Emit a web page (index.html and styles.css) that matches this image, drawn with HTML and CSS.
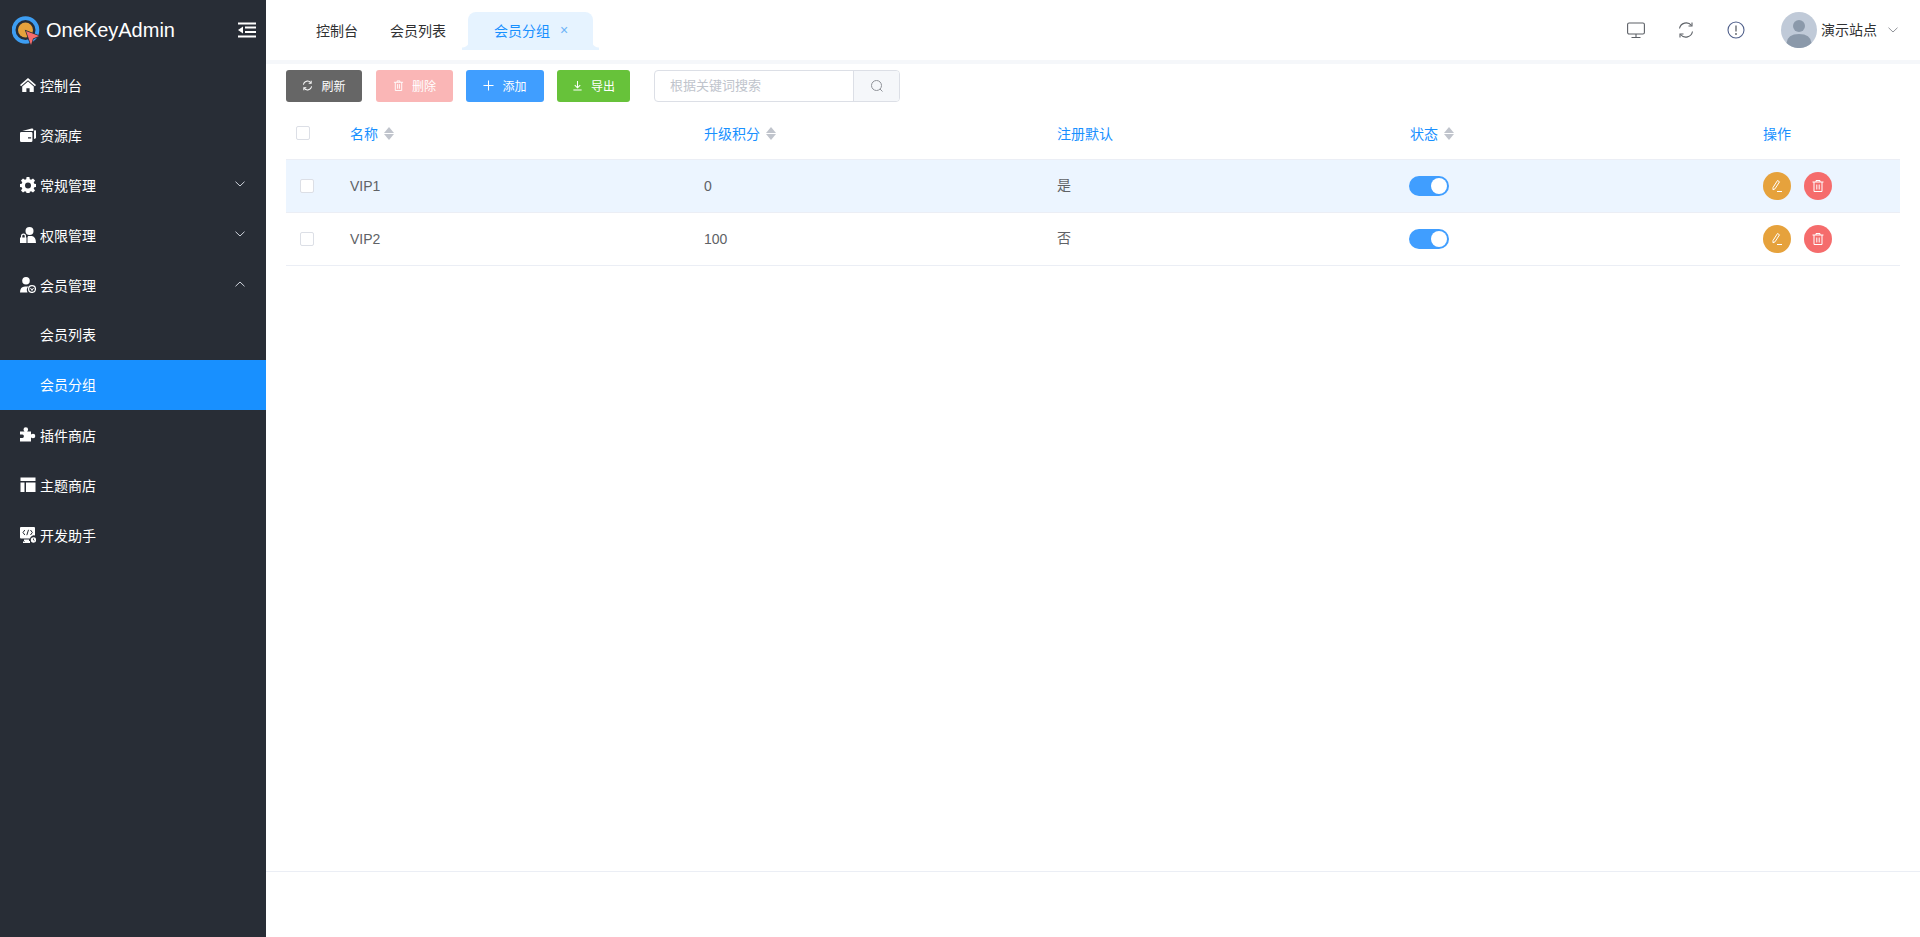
FILE: index.html
```html
<!DOCTYPE html>
<html lang="zh-CN">
<head>
    <meta charset="UTF-8">
    <title>OneKeyAdmin</title>
    <link rel="stylesheet" href="styles.css">
</head>
<body>
    <aside class="sidebar">
        <div class="brand">
            <svg class="logo" viewBox="0 0 30 30" width="30" height="30">
                <circle cx="13.5" cy="15" r="11.9" fill="none" stroke="#3d9df2" stroke-width="3.8"/>
                <circle cx="13.5" cy="15" r="7.5" fill="#e6a23c"/>
                <path d="M14 16L27 21L21 23.500L19 30Z" fill="#f56c6c" stroke="#282d36" stroke-width="1.500" paint-order="stroke"/>
            </svg>
            <span class="brand-name">OneKeyAdmin</span>
            <svg class="fold" viewBox="0 0 18 16" width="18" height="16">
                <path d="M0 1.500h18M7 5.500h11M7 10h11M0 14.500h18" stroke="#fff" stroke-width="1.800" fill="none"/>
                <path d="M0 8l5-3.500v7z" fill="#fff"/>
            </svg>
        </div>
        <ul class="menu">
            <li class="menu-item">
                <svg class="menu-icon" viewBox="0 0 18 16"><path d="M9 0L0 8l1.200 1.300L9 2.600l7.800 6.700L18 8zM9 4L2.500 9.600V16h4.700v-4.400h3.600V16h4.700V9.600z" fill="#fff"/></svg>
                <span>控制台</span>
            </li>
            <li class="menu-item">
                <svg class="menu-icon" viewBox="0 0 18 16"><path d="M0 6q0-1.500 1.500-1.500h11q1.500 0 1.500 1.500v8.500q0 1.500-1.500 1.500h-11Q0 16 0 14.500zM9 10.500v1.500h3.500v-1.500z" fill="#fff" fill-rule="evenodd"/><path d="M2.500 3.500L13 .8q2-.5 2 1.200V3.500zM15.800 3l1.700-.4q.5 0 .5.500V11q0 .8-.8 1l-1.400.5z" fill="#fff"/></svg>
                <span>资源库</span>
            </li>
            <li class="menu-item">
                <svg class="menu-icon" viewBox="0 0 16 16"><path d="M6.600 0h2.800l.4 2.200 1.300.6 1.900-1.300 2 2-1.300 1.900.6 1.300 2.200.4v2.800l-2.200.4-.6 1.300 1.300 1.900-2 2-1.900-1.300-1.300.6-.4 2.200H6.600l-.4-2.200-1.300-.6L3 15.500l-2-2 1.300-1.900-.6-1.300L-.5 9.900V7.100l2.200-.4.6-1.300L1 3.500l2-2 1.900 1.300 1.300-.6zM8 5.500a3 3 0 1 0 0 6 3 3 0 0 0 0-6z" fill="#fff"/></svg>
                <span>常规管理</span>
                <svg class="arrow" viewBox="0 0 10 6"><path d="M.5.700L5 5l4.500-4.300" fill="none" stroke="#cfd3dc" stroke-width="1"/></svg>
            </li>
            <li class="menu-item">
                <svg class="menu-icon" viewBox="0 0 16 16"><circle cx="9.500" cy="4" r="4" fill="#fff"/><path d="M8 9h4q4 1 4 7H7.500V10.500zM1 10.500V9a2.500 2.500 0 0 1 5 0v1.500h.5V16H0v-5.500zM2.300 10.500h2.400V9a1.200 1.200 0 0 0-2.400 0z" fill="#fff" fill-rule="evenodd"/></svg>
                <span>权限管理</span>
                <svg class="arrow" viewBox="0 0 10 6"><path d="M.5.700L5 5l4.500-4.300" fill="none" stroke="#cfd3dc" stroke-width="1"/></svg>
            </li>
            <li class="menu-item">
                <svg class="menu-icon" viewBox="0 0 16 16"><circle cx="6" cy="3.800" r="3.800" fill="#fff"/><path d="M0 15.500q0-6 5-6h3.500a5 5 0 0 0-1 6z" fill="#fff"/><circle cx="12" cy="12" r="3.400" fill="none" stroke="#fff" stroke-width="1.300"/><path d="M10.500 11l1.500 2.500 1.500-2.500" fill="none" stroke="#fff"/></svg>
                <span>会员管理</span>
                <svg class="arrow" viewBox="0 0 10 6"><path d="M.5 5.300L5 1l4.500 4.300" fill="none" stroke="#cfd3dc" stroke-width="1"/></svg>
            </li>
            <li class="menu-item sub"><span>会员列表</span></li>
            <li class="menu-item sub active"><span>会员分组</span></li>
            <li class="menu-item">
                <svg class="menu-icon" viewBox="0 0 16 16"><path d="M0 4.500h4.500q-1-1-1-2a2.300 2.300 0 0 1 4.600 0q0 1-1 2H11v3q1-.8 2-.8a2.300 2.300 0 0 1 0 4.600q-1 0-2-.8v4H0v-3.500h2.500a1.800 1.800 0 0 0 0-3.500H0z" fill="#fff"/></svg>
                <span>插件商店</span>
            </li>
            <li class="menu-item">
                <svg class="menu-icon" viewBox="0 0 16 16"><path d="M.5.500h15v3.500H.5zM.5 5.500h4V15h-4zM6 5.500h9.500V15H6z" fill="#fff"/></svg>
                <span>主题商店</span>
            </li>
            <li class="menu-item">
                <svg class="menu-icon" viewBox="0 0 16 16"><path d="M1 0h13q1 0 1 1v7.500a4 4 0 0 0-5 3H1q-1 0-1-1V1q0-1 1-1z" fill="#fff"/><path d="M4.800 3L3 5.500 4.800 8M10.500 3l1.800 2.500L10.500 8M8.500 2.800L6.800 8.200" fill="none" stroke="#282d36" stroke-width="1"/><path d="M4 12.500h5V14h1v2H3v-1.500h2V14H4z" fill="#fff"/><circle cx="13.500" cy="13" r="2.700" fill="#fff"/><path d="M13.500 11.500V13l1 .7" stroke="#282d36" fill="none" stroke-width=".8"/></svg>
                <span>开发助手</span>
            </li>
        </ul>
    </aside>

    <div class="main">
        <header class="topbar">
            <nav class="tabs">
                <a class="tab">控制台</a>
                <a class="tab">会员列表</a>
                <a class="tab tab-active">会员分组<span class="tab-close">×</span></a>
            </nav>
            <div class="top-actions">
                <svg class="top-icon" viewBox="0 0 18 18"><rect x=".6" y="2" width="16.800" height="11" rx="1.500" fill="none" stroke="#5c6066" stroke-width="1.100"/><path d="M9 13v3.500M4.500 16.500h9" stroke="#5c6066" stroke-width="1.100"/></svg>
                <svg class="top-icon" viewBox="0 0 18 18"><path d="M2.500 7.500A6.800 6.800 0 0 1 14.500 4.500M15.500 10.500A6.800 6.800 0 0 1 3.500 13.500" fill="none" stroke="#5c6066" stroke-width="1.100"/><path d="M15 1.500v3.500h-3.500M3 16.500V13h3.500" fill="none" stroke="#5c6066" stroke-width="1.100"/></svg>
                <svg class="top-icon" viewBox="0 0 18 18"><circle cx="9" cy="9" r="8" fill="none" stroke="#4f5f8a" stroke-width="1.100"/><path d="M9 4.500v6" stroke="#5c6066" stroke-width="1.300"/><circle cx="9" cy="13" r=".9" fill="#5c6066"/></svg>
                <div class="user">
                    <svg class="avatar" viewBox="0 0 36 36"><circle cx="18" cy="18" r="18" fill="#c0cad8"/><circle cx="18" cy="14" r="6" fill="#8b99aa"/><path d="M5.500 31q1-9 12.500-9t12.500 9a18 18 0 0 1-25 0z" fill="#8b99aa"/></svg>
                    <span class="user-name">演示站点</span>
                    <svg class="user-arrow" viewBox="0 0 10 6"><path d="M.5.700L5 5l4.500-4.300" fill="none" stroke="#909399"/></svg>
                </div>
            </div>
        </header>

        <main class="content">
            <div class="toolbar">
                <button class="btn btn-refresh">
                    <svg class="btn-icon" viewBox="0 0 12 12"><path d="M1.500 5A4.500 4.500 0 0 1 9.500 3M10.500 7A4.500 4.500 0 0 1 2.500 9" fill="none" stroke="#fff" stroke-width="1.100"/><path d="M10 .8V3.500H7.300M2 11.200V8.500h2.700" fill="none" stroke="#fff" stroke-width="1.100"/></svg>
                    刷新
                </button>
                <button class="btn btn-delete">
                    <svg class="btn-icon" viewBox="0 0 12 12"><path d="M1 2.500h10M4.500 2.500V1h3v1.500M2.500 2.500v9h7v-9M5 4.500v5M7 4.500v5" fill="none" stroke="#fff"/></svg>
                    删除
                </button>
                <button class="btn btn-add">
                    <svg class="btn-icon" viewBox="0 0 12 12"><path d="M6 .5v11M.5 6h11" stroke="#fff" stroke-width="1.100"/></svg>
                    添加
                </button>
                <button class="btn btn-export">
                    <svg class="btn-icon" viewBox="0 0 12 12"><path d="M6 1v7M3 5.500L6 8.500l3-3M1.500 11h9" fill="none" stroke="#fff" stroke-width="1.100"/></svg>
                    导出
                </button>
                <div class="search">
                    <input class="search-input" type="text" placeholder="根据关键词搜索">
                    <span class="search-btn">
                        <svg viewBox="0 0 14 14" width="14" height="14"><circle cx="6.500" cy="6.500" r="5" fill="none" stroke="#909399"/><path d="M10 10l2.500 2.500" stroke="#909399"/></svg>
                    </span>
                </div>
            </div>

            <table class="data-table">
                <colgroup>
                    <col class="col-check"><col class="col-name"><col class="col-data"><col class="col-data"><col class="col-data"><col>
                </colgroup>
                <thead>
                    <tr>
                        <th><span class="check check-head"></span></th>
                        <th>名称<span class="sort"></span></th>
                        <th>升级积分<span class="sort"></span></th>
                        <th>注册默认</th>
                        <th>状态<span class="sort"></span></th>
                        <th>操作</th>
                    </tr>
                </thead>
                <tbody>
                    <tr class="row-hover">
                        <td><span class="check"></span></td>
                        <td>VIP1</td>
                        <td>0</td>
                        <td class="cell-cn">是</td>
                        <td><span class="switch"></span></td>
                        <td>
                            <div class="ops">
                                <span class="op op-edit"><svg viewBox="0 0 14 14" width="14" height="14"><path d="M7.500 1.500l2 1.300-4.500 7-2 1 0-2.300zM7 12.500h5" fill="none" stroke="#fff"/></svg></span>
                                <span class="op op-del"><svg viewBox="0 0 14 14" width="14" height="14"><path d="M1.500 3h11M5 3V1.500h4V3M3 3v9.500h8V3M5.800 5.500v5M8.200 5.500v5" fill="none" stroke="#fff"/></svg></span>
                            </div>
                        </td>
                    </tr>
                    <tr>
                        <td><span class="check"></span></td>
                        <td>VIP2</td>
                        <td>100</td>
                        <td class="cell-cn">否</td>
                        <td><span class="switch"></span></td>
                        <td>
                            <div class="ops">
                                <span class="op op-edit"><svg viewBox="0 0 14 14" width="14" height="14"><path d="M7.500 1.500l2 1.300-4.500 7-2 1 0-2.300zM7 12.500h5" fill="none" stroke="#fff"/></svg></span>
                                <span class="op op-del"><svg viewBox="0 0 14 14" width="14" height="14"><path d="M1.500 3h11M5 3V1.500h4V3M3 3v9.500h8V3M5.800 5.500v5M8.200 5.500v5" fill="none" stroke="#fff"/></svg></span>
                            </div>
                        </td>
                    </tr>
                </tbody>
            </table>
        </main>

        <footer class="footer"></footer>
    </div>
</body>
</html>
```

FILE: styles.css
```css
* {
    box-sizing: border-box;
}

body {
    font-family: "Liberation Sans", "Noto Sans CJK SC", sans-serif;
    font-size: 14px;
    margin: 0;
    height: 937px;
    display: flex;
    overflow: hidden;
    background-color: #fff;
}

/* Sidebar */
.sidebar {
    width: 266px;
    flex-shrink: 0;
    background-color: #282d36;
    color: #fff;
}

.brand {
    height: 60px;
    display: flex;
    align-items: center;
    padding: 0 10px 0 12px;
}

.logo {
    flex-shrink: 0;
}

.brand-name {
    margin-left: 4px;
    font-size: 20px;
    flex: 1;
}

.menu {
    list-style: none;
    margin: 0;
    padding: 0;
}

.menu-item {
    height: 50px;
    display: flex;
    align-items: center;
    padding: 0 21px 0 20px;
}

.menu-item.sub {
    padding: 0 21px 2px 40px;
}

.menu-item.active {
    background-color: #1890ff;
}

.menu-icon {
    width: 16px;
    height: 16px;
    margin-right: 4px;
    flex-shrink: 0;
}

.menu-item span {
    flex: 1;
}

.arrow {
    width: 10px;
    height: 6px;
    margin-top: -3px;
}

/* Top bar */
.main {
    flex: 1;
    min-width: 0;
    display: flex;
    flex-direction: column;
}

.topbar {
    height: 64px;
    flex-shrink: 0;
    display: flex;
    justify-content: space-between;
    border-bottom: 4px solid #f5f7fa;
}

.tabs {
    display: flex;
    align-items: flex-end;
    padding: 0 0 10px 50px;
}

.tab {
    height: 38px;
    padding-bottom: 2px;
    display: flex;
    align-items: center;
    margin-right: 32px;
    color: #303133;
}

.tab-active {
    position: relative;
    width: 125px;
    margin: 0 0 0 -10px;
    padding-left: 26px;
    color: #1890ff;
    background-color: #e6f3ff;
    border-radius: 8px 8px 0 0;
}

.tab-active::before,
.tab-active::after {
    content: "";
    position: absolute;
    bottom: 0;
    width: 6px;
    height: 10px;
}

.tab-active::before {
    left: -6px;
    background: radial-gradient(circle at 0 0, transparent 7px, #e6f3ff 8px);
}

.tab-active::after {
    right: -6px;
    background: radial-gradient(circle at 100% 0, transparent 7px, #e6f3ff 8px);
}

.tab-close {
    margin-left: 10px;
    font-size: 14px;
    color: #6cb2f7;
}

.top-actions {
    display: flex;
    align-items: center;
    padding-right: 22px;
}

.top-icon {
    width: 18px;
    height: 18px;
    margin-right: 32px;
}

.user {
    display: flex;
    align-items: center;
    margin-left: 4px;
}

.avatar {
    width: 36px;
    height: 36px;
}

.user-name {
    margin-left: 4px;
    padding-bottom: 3px;
    font-size: 14px;
    color: #303133;
}

.user-arrow {
    width: 10px;
    height: 6px;
    margin-left: 11px;
}

/* Content */
.content {
    flex: 1;
    padding: 6px 20px 0;
}

.toolbar {
    display: flex;
    align-items: center;
    height: 32px;
}

.btn {
    height: 32px;
    width: 76px;
    margin-right: 13px;
    padding: 0 0 1px;
    display: flex;
    align-items: center;
    justify-content: center;
    border: none;
    border-radius: 3px;
    color: #fff;
    font-family: inherit;
    font-size: 12px;
}

.btn-icon {
    width: 11px;
    height: 11px;
    margin-right: 8px;
}

.btn-refresh {
    margin-right: 14px;
    background-color: #666;
}

.btn-delete {
    width: 77px;
    background-color: #fab6b6;
}

.btn-add {
    width: 78px;
    background-color: #409eff;
}

.btn-export {
    width: 73px;
    margin-right: 24px;
    background-color: #67c23a;
}

.search {
    width: 246px;
    height: 32px;
    display: flex;
    border: 1px solid #dcdfe6;
    border-radius: 4px;
}

.search-input {
    flex: 1;
    min-width: 0;
    border: none;
    outline: none;
    padding: 0 15px 2px;
    background: transparent;
    font-family: inherit;
    font-size: 13px;
}

.search-input::placeholder {
    color: #c0c4cc;
}

.search-btn {
    width: 46px;
    display: flex;
    align-items: center;
    justify-content: center;
    background-color: #f5f7fa;
    border-left: 1px solid #dcdfe6;
    border-radius: 0 3px 3px 0;
}

/* Table */
.data-table {
    width: 100%;
    margin-top: 6px;
    table-layout: fixed;
    border-collapse: collapse;
    font-size: 14px;
}

.col-check {
    width: 52px;
}

.col-name {
    width: 354px;
}

.col-data {
    width: 353px;
}

.data-table th {
    height: 51px;
    padding: 0 12px;
    text-align: left;
    font-weight: normal;
    color: #1890ff;
    border-bottom: 1px solid #ebeef5;
}

.data-table td {
    height: 53px;
    padding: 0 12px;
    color: #606266;
    border-bottom: 1px solid #ebeef5;
}

.data-table .cell-cn {
    padding-bottom: 3px;
}

.row-hover td {
    background-color: #ecf5ff;
}

.check {
    display: block;
    width: 14px;
    height: 14px;
    background-color: #fff;
    border: 1px solid #dcdfe6;
    border-radius: 2px;
    margin-left: 2px;
}

.check-head {
    margin-left: -2px;
}

.sort {
    display: inline-block;
    position: relative;
    width: 10px;
    height: 13px;
    margin-left: 6px;
    vertical-align: -1px;
}

.sort::before,
.sort::after {
    content: "";
    position: absolute;
    left: 0;
    border-left: 5px solid transparent;
    border-right: 5px solid transparent;
}

.sort::before {
    top: 0;
    border-bottom: 6px solid #c0c4cc;
}

.sort::after {
    bottom: 0;
    border-top: 6px solid #c0c4cc;
}

.switch {
    display: block;
    position: relative;
    width: 40px;
    height: 20px;
    margin-left: -1px;
    border-radius: 10px;
    background-color: #409eff;
}

.switch::after {
    content: "";
    position: absolute;
    top: 2px;
    right: 2px;
    width: 16px;
    height: 16px;
    border-radius: 50%;
    background-color: #fff;
}

.ops {
    display: flex;
    gap: 13px;
}

.op {
    width: 28px;
    height: 28px;
    display: flex;
    align-items: center;
    justify-content: center;
    border-radius: 50%;
}

.op-edit {
    background-color: #e6a23c;
}

.op-del {
    background-color: #f56c6c;
}

/* Footer */
.footer {
    height: 66px;
    flex-shrink: 0;
    border-top: 1px solid #ebeef5;
}
```
